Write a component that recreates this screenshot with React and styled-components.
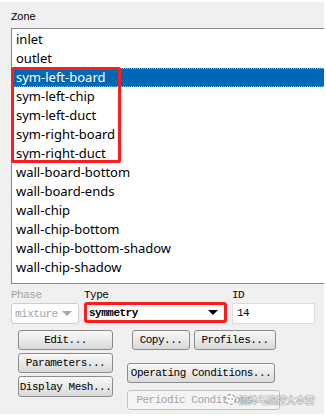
import React from 'react';
import styled, { createGlobalStyle } from 'styled-components';

const GlobalStyle = createGlobalStyle`
    body {
        margin: 0;
        background: #ffffff;
    }
`

const mono = `"Liberation Mono", "DejaVu Sans Mono", monospace`

const Panel = styled.div`
    position: relative;
    margin-top: 2px;
    width: 324px;
    height: 412px;
    box-sizing: border-box;
    padding: 8px 0 0 11px;
    background: #f0f0f0;
    overflow: hidden;
`
const Label = styled.div`
    font-family: ${mono};
    font-size: 11px;
    line-height: 14px;
    height: 14px;
    letter-spacing: -0.5px;
    color: ${p => (p.$disabled ? '#a3a3a3' : '#000000')};
`
const ListBox = styled.div`
    position: relative;
    margin-top: 4px;
    height: 256px;
    box-sizing: border-box;
    border: 1px solid #828790;
    border-right: none;
    background: #ffffff;
    padding-top: 1px;
`
const Row = styled.div`
    height: 19px;
    box-sizing: border-box;
    padding-left: 4px;
    font-family: "Noto Sans", sans-serif;
    font-size: 13px;
    line-height: 17px;
    color: ${p => (p.$selected ? '#ffffff' : '#000000')};
    background: ${p => (p.$selected ? '#0068b5' : 'transparent')};
    border-top: 1px dotted ${p => (p.$selected ? '#f5a040' : 'transparent')};
    border-bottom: 1px dotted ${p => (p.$selected ? '#f5a040' : 'transparent')};
    white-space: nowrap;
`
const Highlight = styled.div`
    position: absolute;
    left: -1px;
    top: 38px;
    width: 110px;
    height: 96px;
    box-sizing: border-box;
    border: 3px solid #ff1c1c;
    border-radius: 2px;
    pointer-events: none;
`
const Fields = styled.div`
    display: grid;
    grid-template-columns: 68px 143px 83px;
    column-gap: 5px;
    margin-top: 4px;
    align-items: end;
`
const Select = styled.div`
    display: flex;
    align-items: center;
    justify-content: space-between;
    height: 21px;
    box-sizing: border-box;
    padding: 0 6px 0 ${p => (p.$marked ? '2px' : '3px')};
    background: #ffffff;
    border: ${p => (p.$marked ? '3px solid #ff1c1c' : '1px solid #cdcdcd')};
    border-radius: 3px;
    font-family: ${mono};
    font-size: 11px;
    letter-spacing: -0.5px;
    color: ${p => (p.$disabled ? '#a3a3a3' : '#000000')};
    font-weight: ${p => (p.$marked ? 'bold' : 'normal')};
    margin-bottom: ${p => (p.$marked ? '1px' : '0')};
`
const Arrow = styled.span`
    flex-shrink: 0;
    width: 0;
    height: 0;
    border-left: 5px solid transparent;
    border-right: 5px solid transparent;
    border-top: 5px solid ${p => (p.$disabled ? '#a8a8a8' : '#000000')};
`
const TextInput = styled.div`
    height: 21px;
    box-sizing: border-box;
    padding-left: 4px;
    background: #ffffff;
    border: 1px solid #dcdcdc;
    font-family: ${mono};
    font-size: 11px;
    line-height: 19px;
    letter-spacing: -0.5px;
`
const Buttons = styled.div`
    display: flex;
    margin-top: 6px;
    margin-left: 7px;
    gap: 14px;
`
const Column = styled.div`
    display: flex;
    flex-direction: column;
    gap: ${p => p.$gap || '3px'};
`
const ButtonRow = styled.div`
    display: flex;
    gap: 4px;
    padding-left: 5px;
`
const Button = styled.div`
    width: ${p => p.$w}px;
    height: ${p => p.$h || 20}px;
    margin-top: ${p => p.$mt || 0}px;
    box-sizing: border-box;
    display: flex;
    align-items: center;
    justify-content: center;
    border: 1px solid ${p => (p.$disabled ? '#c4c4c4' : '#8c8c8c')};
    border-radius: 3px;
    background: ${p => (p.$disabled ? '#f4f4f4' : 'linear-gradient(#f8f8f8, #e9e9e9 50%, #d9d9d9)')};
    font-family: ${mono};
    font-size: 11px;
    letter-spacing: -0.5px;
    color: ${p => (p.$disabled ? '#a3a3a3' : '#000000')};
    white-space: nowrap;
    overflow: hidden;
`
const Watermark = styled.div`
    position: absolute;
    left: 224px;
    top: 391px;
    display: flex;
    align-items: center;
    gap: 2px;
    font-family: "Noto Sans CJK SC", sans-serif;
    font-size: 10px;
    line-height: 13px;
    letter-spacing: -0.6px;
    color: rgba(255, 255, 255, 0.95);
    text-shadow: 0 0 1px #6a6a6a, 0 0 1px #6a6a6a;
`

const zones = [
    'inlet', 'outlet', 'sym-left-board', 'sym-left-chip', 'sym-left-duct',
    'sym-right-board', 'sym-right-duct', 'wall-board-bottom', 'wall-board-ends',
    'wall-chip', 'wall-chip-bottom', 'wall-chip-bottom-shadow', 'wall-chip-shadow',
]

export default function App() {
    return (
        <Panel>
            <GlobalStyle />
            <Label>Zone</Label>
            <ListBox>
                {zones.map((z, i) => (
                    <Row key={z} $selected={i === 2}>{z}</Row>
                ))}
                <Highlight />
            </ListBox>
            <Fields>
                <Label $disabled>Phase</Label>
                <Label>Type</Label>
                <Label>ID</Label>
                <Select $disabled>mixture<Arrow $disabled /></Select>
                <Select $marked>symmetry<Arrow /></Select>
                <TextInput>14</TextInput>
            </Fields>
            <Buttons>
                <Column>
                    <Button $w={95}>Edit...</Button>
                    <Button $w={95}>Parameters...</Button>
                    <Button $w={95} $h={21}>Display Mesh...</Button>
                </Column>
                <Column $gap="0px">
                    <ButtonRow>
                        <Button $w={58}>Copy...</Button>
                        <Button $w={82}>Profiles...</Button>
                    </ButtonRow>
                    <Button $w={148} $mt={13}>Operating Conditions...</Button>
                    <Button $w={153} $mt={7} $disabled>Periodic Conditions...</Button>
                </Column>
            </Buttons>
            <Watermark>
                <svg width="13" height="13" viewBox="0 0 12 12">
                    <circle cx="6" cy="6" r="4.5" fill="#ffffff" stroke="#9a9a9a" strokeWidth="1" strokeDasharray="3 1.5" />
                    <circle cx="4.5" cy="5.5" r="0.8" fill="#9a9a9a" />
                    <circle cx="7.5" cy="5.5" r="0.8" fill="#9a9a9a" />
                </svg>
                流体与热控大本营
            </Watermark>
        </Panel>
    );
}
